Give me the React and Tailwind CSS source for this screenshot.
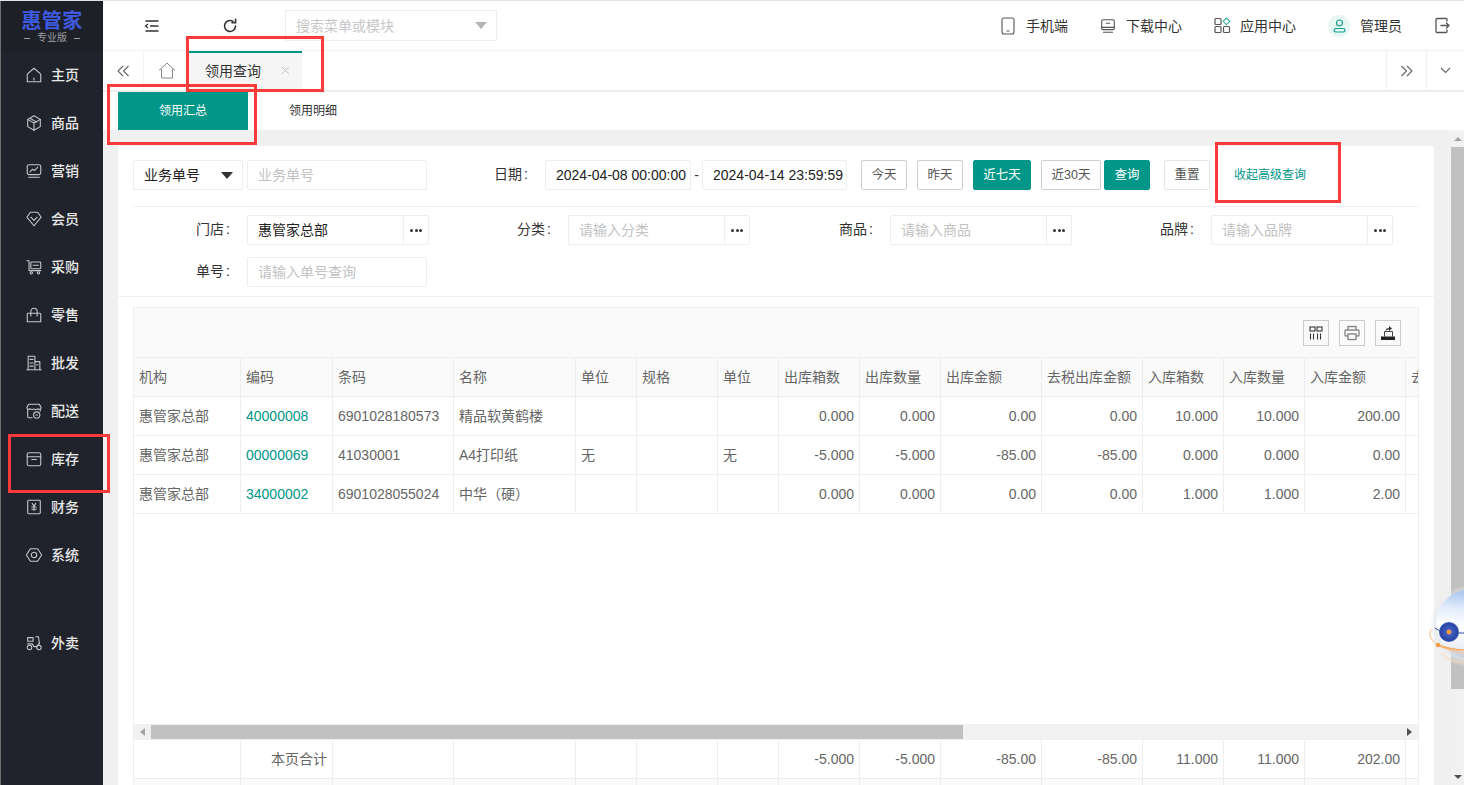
import React from "react";

const S = ({ children, size = 18, cls = "", sw = 1.2, vb = "0 0 20 20" }) => (
  <svg width={size} height={size} viewBox={vb} fill="none" stroke="currentColor" strokeWidth={sw} strokeLinecap="round" strokeLinejoin="round" className={cls}>
    {children}
  </svg>
);

const navIcons = {
  home: <><path d="M2.5 9 10 2.5 17.5 9v8.5h-15z" /><path d="M10 13.5v2" /></>,
  cube: <><path d="M10 2l7 4v8l-7 4-7-4V6z" /><path d="M3 6l7 4 7-4M10 10v8" /><path d="M6 5l7 4" /></>,
  chart: <><rect x="2.5" y="3" width="15" height="11" rx="2" /><path d="M5.5 11l3-3 2 1.5 3.5-3.5" /><path d="M4 17h12" /></>,
  vip: <><path d="M6 2.5h8l4 5.5-8 9.5L2 8z" /><path d="M6.5 8l3.5 3.5L13.5 8" /></>,
  cart: <><path d="M2 3h2.5v11h13" /><rect x="6.5" y="4.5" width="11" height="7.5" rx="1" /><path d="M9 8h6" /><circle cx="7" cy="16.5" r="1.3" /><circle cx="15" cy="16.5" r="1.3" /></>,
  bag: <><path d="M3.5 8h13a1 1 0 0 1 1 1v8.5h-15V9a1 1 0 0 1 1-1z" /><path d="M6.5 11V6a3.5 3.5 0 0 1 7 0v5" /></>,
  build: <><path d="M3.5 17.5v-15h7.5v15" /><path d="M11 8.5h5.5v9" /><path d="M2 17.5h16" /><path d="M5.5 6h3.5M5.5 10h3.5M5.5 13.5h3.5M13 12h1.5" /></>,
  shop: <><path d="M3 8v8.5a1 1 0 0 0 1 1h4" /><path d="M17 8v2" /><path d="M4 2.5h12l2 4a2.4 2.4 0 0 1-4 1 2.6 2.6 0 0 1-4 0 2.6 2.6 0 0 1-4 0 2.4 2.4 0 0 1-4-1z" /><circle cx="13" cy="14.5" r="3.5" /><path d="M12 14.5h2" /></>,
  box: <><path d="M2.5 7.5V5a2 2 0 0 1 2-2h11a2 2 0 0 1 2 2v2.5" /><path d="M2.5 7.5h15v8a2 2 0 0 1-2 2h-11a2 2 0 0 1-2-2z" /><path d="M7.5 10.5h5" /></>,
  yen: <><rect x="3" y="2.5" width="14" height="15" rx="1" /><path d="M8 6l2 3 2-3M7.5 10h5M7.5 12.5h5M10 9v5" /></>,
  gear: <><path d="M6 3h8l4.5 7-4.5 7H6l-4.5-7z" /><circle cx="10" cy="10" r="3" /></>,
  moto: <><circle cx="5" cy="15" r="2.5" /><circle cx="15.5" cy="15" r="2.5" /><path d="M3 4h6v4H3z" /><path d="M12 3h3l1 8" /><path d="M3 11h5l2 3h3l3-4" /></>,
};

const nav = [
  ["home", "主页"], ["cube", "商品"], ["chart", "营销"], ["vip", "会员"], ["cart", "采购"], ["bag", "零售"],
  ["build", "批发"], ["shop", "配送"], ["box", "库存"], ["yen", "财务"], ["gear", "系统"],
];

const Tool = ({ icon, label, iconGap = "gap-[11px]", cls = "" }) => (
  <div className={`flex items-center ${iconGap} ${cls}`}>
    {icon}
    <span className="text-sm text-[#333]">{label}</span>
  </div>
);

const Btn = ({ children, cls = "" }) => (
  <button className={`h-[30px] rounded-[2px] border text-[12.5px] ${cls}`}>{children}</button>
);

const Label = ({ children }) => (
  <span className="w-[97px] pb-[3px] text-right text-sm text-[#333]">
    {children}
    <span className="ml-[2px]">:</span>
  </span>
);

const Field = ({ label, value, placeholder }) => (
  <div className="flex items-center">
    <Label>{label}</Label>
    <div className="ml-[17px] flex h-[30px] w-[182px] rounded-[2px] border border-[#eeeeee]">
      <span className={`flex-1 pl-[10px] text-sm leading-[28px] ${value ? "text-[#222]" : "text-[#c2c2c2]"}`}>{value || placeholder}</span>
      <span className="flex w-[25px] items-center justify-center gap-[1.5px] border-l border-[#eeeeee]">
        <i className="h-[3px] w-[3px] rounded-full bg-[#333]" />
        <i className="h-[3px] w-[3px] rounded-full bg-[#333]" />
        <i className="h-[3px] w-[3px] rounded-full bg-[#333]" />
      </span>
    </div>
  </div>
);

const gridCols = "grid grid-cols-[107px_92px_121px_122px_61px_81px_61px_81px_81px_101px_101px_81px_81px_101px_100px] w-[1372px]";

const head = ["机构", "编码", "条码", "名称", "单位", "规格", "单位", "出库箱数", "出库数量", "出库金额", "去税出库金额", "入库箱数", "入库数量", "入库金额", "去税入库金额"];
const rows = [
  ["惠管家总部", "40000008", "6901028180573", "精品软黄鹤楼", "", "", "", "0.000", "0.000", "0.00", "0.00", "10.000", "10.000", "200.00", ""],
  ["惠管家总部", "00000069", "41030001", "A4打印纸", "无", "", "无", "-5.000", "-5.000", "-85.00", "-85.00", "0.000", "0.000", "0.00", ""],
  ["惠管家总部", "34000002", "6901028055024", "中华（硬）", "", "", "", "0.000", "0.000", "0.00", "0.00", "1.000", "1.000", "2.00", ""],
];
const total = ["", "本页合计", "", "", "", "", "", "-5.000", "-5.000", "-85.00", "-85.00", "11.000", "11.000", "202.00", ""];

const Cell = ({ children, right, cls = "" }) => (
  <div className={`h-[39px] overflow-hidden whitespace-nowrap border-r border-b border-[#eeeeee] px-[5px] text-sm leading-[38px] ${right ? "text-right" : ""} ${cls}`}>
    {children}
  </div>
);

const Red = ({ cls }) => <div className={`pointer-events-none absolute border-[3px] border-[#fb3a3a] ${cls}`} />;

export default function App() {
  return (
    <div className="relative flex h-[785px] w-[1464px] overflow-hidden border-t border-[#e4e4e4] bg-white [font-family:'Liberation_Sans','Noto_Sans_CJK_SC',sans-serif]">
      {/* Sidebar */}
      <aside className="flex w-[103px] shrink-0 flex-col border-l border-[#6e6e6e] bg-[#20232b] text-[#e8e8e8]">
        <div className="flex h-[50px] flex-col items-center bg-[#1d2027] pt-[8px]">
          <div className="text-[20px] leading-[24px] font-bold tracking-[0.3px] text-[#3d5ae0]">惠管家</div>
          <div className="-mt-px flex items-center gap-[7px] text-[10px] leading-[12px] text-[#9a9ca2]">
            <i className="h-px w-[6px] bg-[#9a9ca2]" />专业版<i className="h-px w-[6px] bg-[#9a9ca2]" />
          </div>
        </div>
        <nav className="flex flex-col">
          {nav.map(([k, t]) => (
            <div key={t} className="flex h-[48px] items-center gap-[8px] pl-[24px]">
              <S cls="text-[#c6c8cc]">{navIcons[k]}</S>
              <span className="text-sm font-medium">{t}</span>
            </div>
          ))}
          <div className="mt-[40px] flex h-[48px] items-center gap-[8px] pl-[24px]">
            <S cls="text-[#c6c8cc]">{navIcons.moto}</S>
            <span className="text-sm font-medium">外卖</span>
          </div>
        </nav>
      </aside>

      <div className="flex min-w-0 flex-1 flex-col">
        {/* Header */}
        <header className="flex h-[50px] shrink-0 items-center border-b border-[#f2f2f2] pr-[14px]">
          <div className="ml-[41px] text-[#333]">
            <svg width="16" height="16" viewBox="0 0 16 16" fill="none" stroke="currentColor" strokeWidth="1.3"><path d="M1.5 3h13M6 8h8.5M1.5 13h13" /><path d="M4 6L1.5 8 4 10" /></svg>
          </div>
          <div className="ml-[62px] text-[#333]">
            <svg width="16" height="16" viewBox="0 0 16 16" fill="none" stroke="currentColor" strokeWidth="1.6" strokeLinecap="round"><path d="M13.5 8A5.5 5.5 0 1 1 11 3.4" /><path d="M13.6 1.2v3.6H10" /></svg>
          </div>
          <div className="ml-[47px] flex h-[31px] w-[212px] items-center justify-between border border-[#eeeeee] pr-[9px] pl-[10px] text-sm text-[#c8c8c8]">
            <span>搜索菜单或模块</span>
            <i className="h-0 w-0 border-x-[6px] border-t-[7px] border-x-transparent border-t-[#b4b4b4]" />
          </div>
          <div className="ml-auto flex items-center">
            <Tool iconGap="gap-[8px]" label="手机端" icon={
              <S size={20} cls="text-[#555]" sw={1.1}><rect x="4" y="2" width="12" height="16" rx="2" /><path d="M9 15h2" /></S>} />
            <Tool cls="ml-[31px]" iconGap="gap-[9px]" label="下载中心" icon={
              <S size={18} cls="text-[#555]" sw={1.2}><rect x="3" y="3" width="14" height="11" rx="1.5" /><path d="M8 7h4" /><path d="M3 11.5h14M5 17h10" /></S>} />
            <Tool cls="ml-[32px]" iconGap="gap-[9px]" label="应用中心" icon={
              <svg width="17" height="17" viewBox="0 0 17 17" fill="none" stroke="#555" strokeWidth="1.2"><rect x="1" y="1.5" width="6" height="6" rx="1" /><rect x="1" y="9.5" width="6" height="6" rx="1" /><rect x="9.5" y="9.5" width="6" height="6" rx="1" /><path d="M12.5 1l3.3 3.3-3.3 3.3-3.3-3.3z" stroke="#3fb5a3" /></svg>} />
            <div className="ml-[32px] flex items-center gap-[10px]">
              <div className="flex h-[22px] w-[22px] items-center justify-center rounded-full bg-[#e8f6f3]">
                <svg width="13" height="14" viewBox="0 0 13 14" fill="none" stroke="#12a08f" strokeWidth="1.2"><circle cx="6.5" cy="4" r="3" /><rect x="1" y="9.5" width="11" height="3.5" rx="1.7" /></svg>
              </div>
              <span className="text-sm text-[#333]">管理员</span>
            </div>
            <div className="ml-[33px] text-[#555]">
              <svg width="15" height="17" viewBox="0 0 15 17" fill="none" stroke="currentColor" strokeWidth="1.3" strokeLinecap="round"><path d="M12 4V2.5a1 1 0 0 0-1-1H2a1 1 0 0 0-1 1v12a1 1 0 0 0 1 1h9a1 1 0 0 0 1-1V13" /><path d="M6 8.5h8M11.5 6l2.5 2.5-2.5 2.5" /></svg>
            </div>
          </div>
        </header>

        {/* Tabs */}
        <div className="flex h-[41px] shrink-0 items-stretch border-b-2 border-[#ececec]">
          <div className="flex w-[41px] items-center justify-center border-r border-[#f2f2f2] text-[#666]">
            <svg width="13" height="12" viewBox="0 0 13 12" fill="none" stroke="currentColor" strokeWidth="1.1"><path d="M6 1L1 6l5 5M11.5 1l-5 5 5 5" /></svg>
          </div>
          <div className="flex w-[45px] items-center justify-center text-[#888]">
            <svg width="18" height="17" viewBox="0 0 18 17" fill="none" stroke="currentColor" strokeWidth="1"><path d="M1 8.5L9 1l8 7.5" /><path d="M3.5 7v9h11V7" /></svg>
          </div>
          <div className="flex w-[113px] items-center border-t-2 border-[#009688] bg-[#f5f5f5] pr-[12px] pb-[2px] pl-[16px]">
            <span className="text-sm text-[#333]">领用查询</span>
            <svg className="ml-auto" width="9" height="9" viewBox="0 0 9 9" stroke="#c4c4c4" strokeWidth="1"><path d="M1 1l7 7M8 1L1 8" /></svg>
          </div>
          <div className="ml-auto flex w-[40px] items-center justify-center border-l border-[#f0f0f0] text-[#666]">
            <svg width="13" height="12" viewBox="0 0 13 12" fill="none" stroke="currentColor" strokeWidth="1.1"><path d="M1.5 1l5 5-5 5M7 1l5 5-5 5" /></svg>
          </div>
          <div className="flex w-[38px] items-center justify-center border-l border-[#f0f0f0] text-[#666]">
            <svg width="11" height="7" viewBox="0 0 11 7" fill="none" stroke="currentColor" strokeWidth="1.1"><path d="M1 1l4.5 4.5L10 1" /></svg>
          </div>
        </div>

        {/* Sub tabs */}
        <div className="flex h-[38px] shrink-0 bg-white pl-[15px]">
          <div className="flex w-[130px] items-center justify-center bg-[#009688] text-xs text-white">领用汇总</div>
          <div className="flex w-[130px] items-center justify-center text-xs text-[#333]">领用明细</div>
        </div>

        {/* Content */}
        <div className="flex min-h-0 flex-1">
          <div className="min-w-0 flex-1 bg-[#f0f0f0] pt-[16px] pr-[17px] pl-[15px]">
            <div className="h-[700px] rounded-t-[3px] bg-white">
              <div className="px-[15px] pt-[14px]">
                <div className="flex items-center border-b border-[#eeeeee] pb-[16px]">
                  <div className="flex h-[30px] w-[110px] items-center justify-between rounded-[2px] border border-[#eeeeee] pr-[9px] pl-[10px] text-sm text-[#222]">
                    <span>业务单号</span>
                    <i className="h-0 w-0 border-x-[6px] border-t-[7px] border-x-transparent border-t-[#333]" />
                  </div>
                  <div className="ml-[4px] h-[30px] w-[180px] rounded-[2px] border border-[#eeeeee] pl-[10px] text-sm leading-[28px] text-[#c2c2c2]">业务单号</div>
                  <span className="ml-[67px] w-[51px] pb-[3px] text-sm text-[#333]">日期<span className="ml-[2px]">:</span></span>
                  <div className="h-[30px] w-[146px] rounded-[2px] border border-[#eeeeee] pl-[10px] text-sm leading-[28px] whitespace-nowrap text-[#222]">2024-04-08 00:00:00</div>
                  <span className="w-[11px] text-center text-sm text-[#333]">-</span>
                  <div className="h-[30px] w-[145px] overflow-hidden rounded-[2px] border border-[#eeeeee] pl-[10px] text-sm leading-[28px] whitespace-nowrap text-[#222]">2024-04-14 23:59:59</div>
                  <Btn cls="ml-[14px] w-[46px] border-[#cfcfcf] text-[#555]">今天</Btn>
                  <Btn cls="ml-[10px] w-[46px] border-[#cfcfcf] text-[#555]">昨天</Btn>
                  <Btn cls="ml-[10px] w-[58px] border-[#009688] bg-[#009688] text-white">近七天</Btn>
                  <Btn cls="ml-[10px] w-[60px] border-[#cfcfcf] text-[#555]">近30天</Btn>
                  <Btn cls="ml-[3px] w-[46px] border-[#009688] bg-[#009688] text-white">查询</Btn>
                  <Btn cls="ml-[14px] w-[46px] border-[#e6e6e6] text-[#555]">重置</Btn>
                  <span className="ml-[24px] text-xs text-[#009688]">收起高级查询</span>
                </div>
                <div className="grid grid-cols-[321px_322px_321px_322px] pt-[8px]">
                  <Field label="门店" value="惠管家总部" />
                  <Field label="分类" placeholder="请输入分类" />
                  <Field label="商品" placeholder="请输入商品" />
                  <Field label="品牌" placeholder="请输入品牌" />
                </div>
                <div className="mt-[12px] flex items-center">
                  <Label>单号</Label>
                  <div className="ml-[17px] h-[30px] w-[180px] rounded-[2px] border border-[#eeeeee] pl-[10px] text-sm leading-[28px] text-[#c2c2c2]">请输入单号查询</div>
                </div>
              </div>
              <div className="mt-[9px] border-t border-[#f2f2f2] px-[15px] pt-[10px]">
                <div className="h-[480px] overflow-hidden border border-b-0 border-[#eeeeee]">
                  <div className="flex h-[50px] items-center justify-end gap-[10px] border-b border-[#eeeeee] bg-[#fafafa] pr-[17px]">
                    <div className="flex h-[26px] w-[26px] items-center justify-center border border-[#cccccc] text-[#333]">
                      <svg width="14" height="14" viewBox="0 0 14 14" fill="none" stroke="currentColor" strokeWidth="1.1"><rect x="1" y="1" width="5" height="4" /><rect x="8" y="1" width="5" height="4" /><path d="M1.5 7.5v6M4.5 7.5v6M8.5 7.5v6M11.5 7.5v6" /></svg>
                    </div>
                    <div className="flex h-[26px] w-[26px] items-center justify-center border border-[#cccccc] text-[#888]">
                      <svg width="16" height="16" viewBox="0 0 16 16" fill="none" stroke="currentColor" strokeWidth="1.4"><path d="M4 5V1.5h8V5" /><path d="M4 11H2a1 1 0 0 1-1-1V6a1 1 0 0 1 1-1h12a1 1 0 0 1 1 1v4a1 1 0 0 1-1 1h-2" /><rect x="4" y="9" width="8" height="5.5" /></svg>
                    </div>
                    <div className="flex h-[26px] w-[26px] items-center justify-center border border-[#cccccc]">
                      <svg width="16" height="16" viewBox="0 0 16 16"><path d="M1 11.5h14V15H1z" fill="#222" /><path d="M4.5 11.5V6.5h8v5" fill="none" stroke="#444" strokeWidth="1" /><path d="M5.5 6c0-2 1.5-3 3.5-3V1l3 2.5L9 6V4.5C7.5 4.5 6.5 5 5.5 6z" fill="#333" /></svg>
                    </div>
                  </div>
                  <div className="overflow-hidden">
                    <div className={`${gridCols} bg-[#fafafa] text-[#666]`}>
                      {head.map((h, i) => <Cell key={i}>{h}</Cell>)}
                    </div>
                    {rows.map((r, ri) => (
                      <div key={ri} className={`${gridCols} text-[#666]`}>
                        {r.map((c, i) => (
                          <Cell key={i} right={i >= 7} cls={i === 1 ? "text-[#009688]" : ""}>{c}</Cell>
                        ))}
                      </div>
                    ))}
                    <div className="h-[210px]" />
                    <div className="flex h-[16px] items-center bg-[#f1f1f1]">
                      <div className="flex w-[17px] justify-center"><i className="h-0 w-0 border-y-[4px] border-r-[5px] border-y-transparent border-r-[#a3a3a3]" /></div>
                      <div className="h-[14px] w-[812px] bg-[#c1c1c1]" />
                      <div className="ml-auto flex w-[17px] justify-center"><i className="h-0 w-0 border-y-[4px] border-l-[5px] border-y-transparent border-l-[#505050]" /></div>
                    </div>
                    <div className={`${gridCols} text-[#666]`}>
                      {total.map((c, i) => <Cell key={i} right>{c}</Cell>)}
                    </div>
                    <div className={`${gridCols} bg-[#fafafa]`}>
                      {total.map((_, i) => <Cell key={i} />)}
                    </div>
                  </div>
                </div>
              </div>
            </div>
          </div>
          {/* Page scrollbar */}
          <div className="flex w-[13px] shrink-0 flex-col bg-[#f1f1f1]">
            <div className="flex h-[17px] items-center justify-center"><i className="h-0 w-0 border-x-[4px] border-b-[4px] border-x-transparent border-b-[#a3a3a3]" /></div>
            <div className="h-[542px] bg-[#c1c1c1]" />
            <div className="mt-auto flex h-[17px] items-center justify-center"><i className="h-0 w-0 border-x-[4px] border-t-[4px] border-x-transparent border-t-[#505050]" /></div>
          </div>
        </div>
      </div>

      {/* Floating assistant */}
      <svg className="absolute top-[585px] left-[1424px]" width="40" height="85" viewBox="0 0 40 85" fill="none">
        <defs>
          <linearGradient id="orb" x1="0.6" y1="0" x2="0.5" y2="1">
            <stop offset="0" stopColor="#9fc0ee" />
            <stop offset="0.3" stopColor="#e3edfb" />
            <stop offset="0.55" stopColor="#ffffff" />
            <stop offset="0.85" stopColor="#eef1f7" />
            <stop offset="1" stopColor="#c3c9da" />
          </linearGradient>
          <radialGradient id="eye" cx="0.5" cy="0.5" r="0.5">
            <stop offset="0" stopColor="#4f6fd0" />
            <stop offset="0.85" stopColor="#2a45a5" />
            <stop offset="1" stopColor="#4a63b8" />
          </radialGradient>
          <radialGradient id="glow" cx="0.5" cy="0.5" r="0.5">
            <stop offset="0.75" stopColor="#dfe4ef" stopOpacity="0.8" />
            <stop offset="1" stopColor="#f0f0f0" stopOpacity="0" />
          </radialGradient>
        </defs>
        <circle cx="46" cy="40" r="42" fill="url(#glow)" />
        <circle cx="46" cy="38" r="34" fill="url(#orb)" />
        <path d="M7 44c-5 9 8 20 33 23" stroke="#f7bb80" strokeWidth="1" />
        <path d="M18 67c4 6 11 9 22 10" stroke="#fbd3a8" strokeWidth="1" />
        <path d="M14 59c8 3 16 5 26 5" stroke="#f9a75a" strokeWidth="1.4" />
        <circle cx="14" cy="59" r="2.2" fill="#f59a3c" />
        <path d="M11 42l5 3M34 47h6" stroke="#2f4aa6" strokeWidth="1" />
        <circle cx="25" cy="46" r="10" fill="url(#eye)" />
        <circle cx="25" cy="46" r="2.4" fill="#f79a3a" />
      </svg>

      {/* Annotation boxes */}
      <Red cls="top-[35px] left-[186px] h-[56px] w-[138px]" />
      <Red cls="top-[83px] left-[107px] h-[61px] w-[150px]" />
      <Red cls="top-[433px] left-[8px] h-[59px] w-[102px]" />
      <Red cls="top-[141px] left-[1215px] h-[61px] w-[126px]" />
    </div>
  );
}
